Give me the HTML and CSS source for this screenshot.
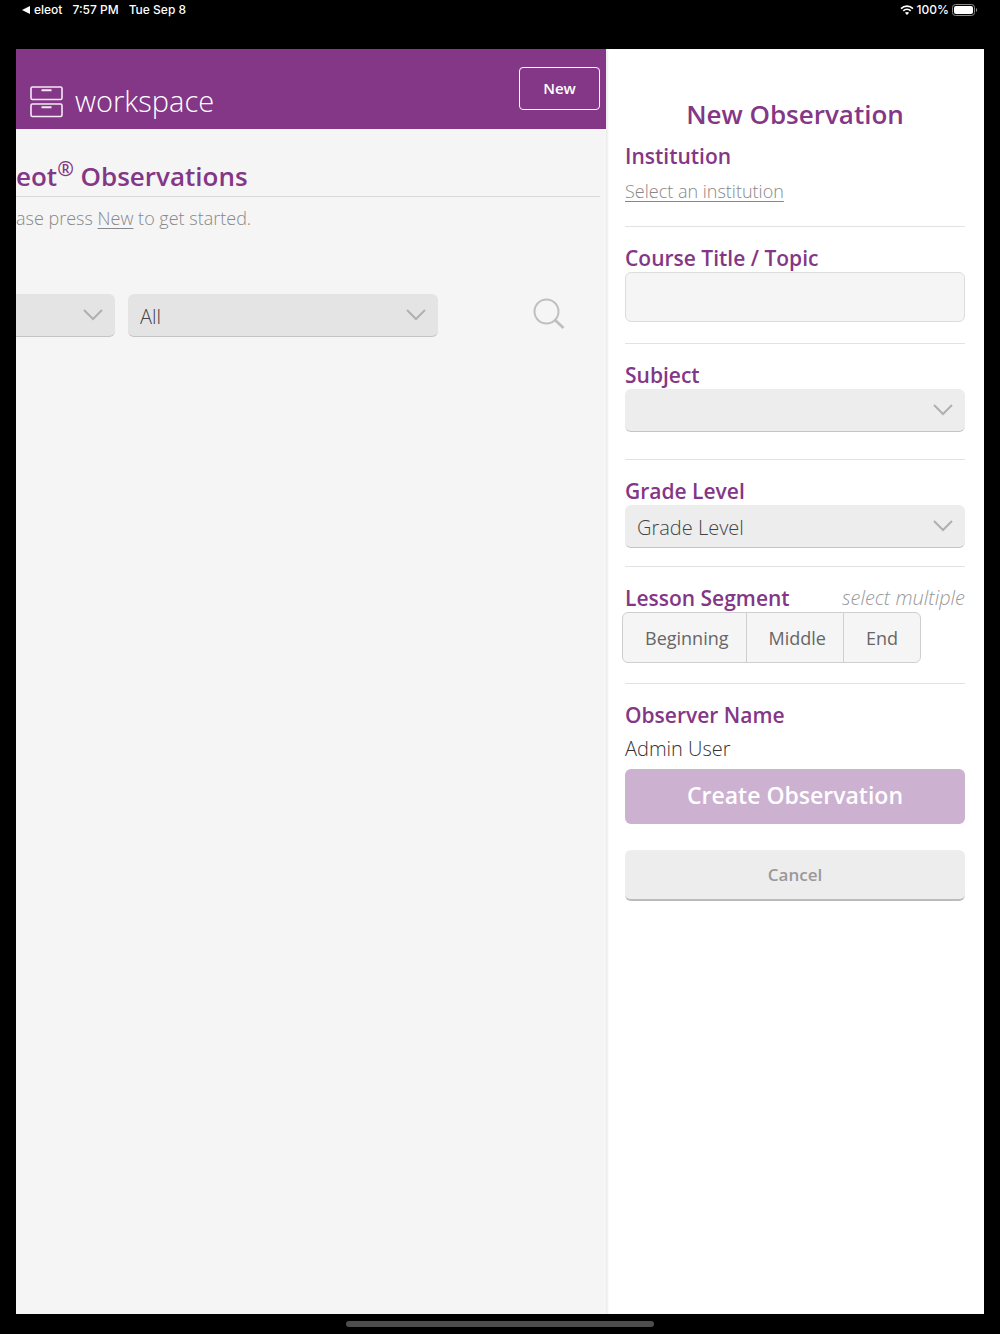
FILE: index.html
```
<!DOCTYPE html>
<html lang="en">
<head>
    <meta charset="UTF-8">
    <meta name="viewport" content="width=device-width, initial-scale=1.0">
    <title>eleot - Workspace</title>
    <link rel="stylesheet" href="styles.css">
</head>
<body>

    <!-- Device status bar -->
    <div class="status-bar">
        <div class="status-left">
            <span class="back"><svg width="8" height="8" viewBox="0 0 8 8"><path d="M0 4L8 0V8Z" fill="#fff"/></svg>eleot</span>
            <span>7:57 PM</span>
            <span>Tue Sep 8</span>
        </div>
        <div class="status-right">
            <svg width="14" height="10" viewBox="0 0 14 10" fill="none" stroke="#fff" stroke-width="1.7">
                <path d="M1 3.6C4.4.2 9.6.2 13 3.6"/>
                <path d="M3.3 5.9C5.4 3.9 8.6 3.9 10.7 5.9"/>
                <path d="M7 10L4.9 7.7C6.1 6.7 7.9 6.7 9.1 7.7Z" fill="#fff" stroke="none"/>
            </svg>
            <span>100%</span>
            <svg width="26" height="12" viewBox="0 0 26 12">
                <rect x=".5" y=".5" width="22" height="11" rx="3" fill="none" stroke="#888"/>
                <rect x="2" y="2" width="19" height="8" rx="2" fill="#fff"/>
                <path d="M24 4C25.6 4.6 25.6 7.4 24 8Z" fill="#888"/>
            </svg>
        </div>
    </div>

    <div class="app">

        <!-- Left side: workspace -->
        <main class="workspace">
            <header class="header">
                <div class="brand">
                    <svg width="33" height="32" viewBox="0 0 33 32" fill="none" stroke="#f5eaf5" stroke-width="1.6">
                        <rect x="1" y="1" width="31" height="12.5" rx="1.5"/>
                        <rect x="1" y="18" width="31" height="12.5" rx="1.5"/>
                        <path d="M11.5 4.3H21.5M11.5 21.3H21.5" stroke-width="2"/>
                    </svg>
                    <span>workspace</span>
                </div>
                <button type="button" class="new-button">New</button>
            </header>

            <div class="content">
                <h1 class="heading">eot<sup>®</sup> Observations</h1>
                <p class="intro">ase press <a href="#new">New</a> to get started.</p>

                <div class="filters">
                    <div class="select-box filter">
                        <select aria-label="Status"><option></option></select>
                        <svg class="chevron" width="20" height="12" viewBox="0 0 20 12"><path d="M1 1L10 10L19 1"/></svg>
                    </div>
                    <div class="select-box filter">
                        <select aria-label="Institution filter"><option>All</option></select>
                        <svg class="chevron" width="20" height="12" viewBox="0 0 20 12"><path d="M1 1L10 10L19 1"/></svg>
                    </div>
                    <button type="button" class="search" aria-label="Search">
                        <svg width="32" height="32" viewBox="0 0 32 32" fill="none" stroke="#bfbfbf">
                            <circle cx="13.5" cy="13.5" r="12" stroke-width="2"/>
                            <path d="M22 22L30.5 30" stroke-width="2.8"/>
                        </svg>
                    </button>
                </div>
            </div>
        </main>

        <!-- Right side: new observation form -->
        <form class="panel" id="new">
            <h2 class="panel-title">New Observation</h2>

            <div class="field institution">
                <h3 class="label">Institution</h3>
                <a class="institution-link" href="#institution">Select an institution</a>
            </div>

            <div class="field course">
                <label class="label" for="course">Course Title / Topic</label>
                <input type="text" id="course">
            </div>

            <div class="field subject">
                <label class="label" for="subject">Subject</label>
                <div class="select-box">
                    <select id="subject"><option></option></select>
                    <svg class="chevron" width="20" height="12" viewBox="0 0 20 12"><path d="M1 1L10 10L19 1"/></svg>
                </div>
            </div>

            <div class="field">
                <label class="label" for="grade">Grade Level</label>
                <div class="select-box">
                    <select id="grade"><option>Grade Level</option></select>
                    <svg class="chevron" width="20" height="12" viewBox="0 0 20 12"><path d="M1 1L10 10L19 1"/></svg>
                </div>
            </div>

            <div class="field lesson">
                <div class="label-row">
                    <h3 class="label" id="segment">Lesson Segment</h3>
                    <em class="hint">select multiple</em>
                </div>
                <div class="segments" role="group" aria-labelledby="segment">
                    <button type="button" aria-pressed="false">Beginning</button>
                    <button type="button" aria-pressed="false">Middle</button>
                    <button type="button" aria-pressed="false">End</button>
                </div>
            </div>

            <div class="field observer">
                <h3 class="label">Observer Name</h3>
                <p class="observer-name">Admin User</p>
                <button type="submit" class="create" disabled>Create Observation</button>
                <button type="button" class="cancel">Cancel</button>
            </div>
        </form>

    </div>

    <div class="home-bar"><span></span></div>

</body>
</html>
```
FILE: styles.css
```
* {
    box-sizing: border-box;
}

body {
    display: flex;
    flex-direction: column;
    min-height: 100vh;
    margin: 0;
    background: #000;
    font-family: "Open Sans", "Noto Sans", sans-serif;
    font-weight: 300;
    color: #333;
}

h1, h2, h3, p {
    margin: 0;
}

button, input, select {
    font-family: inherit;
    margin: 0;
}

svg {
    display: block;
    flex: none;
}

/* Device status bar */
.status-bar {
    display: flex;
    justify-content: space-between;
    height: 49px;
    padding: 0 22px;
    color: #fff;
    font-family: Inter, sans-serif;
    font-size: 12px;
    font-weight: 500;
    line-height: 20px;
}

.status-left, .status-right {
    display: flex;
    height: 20px;
    align-items: center;
}

.status-left {
    gap: 10px;
}

.status-right {
    gap: 3px;
}

.back {
    display: flex;
    align-items: center;
    gap: 4px;
}

/* App window */
.app {
    flex: 1;
    display: flex;
    margin: 0 16px;
    background: #f5f5f5;
}

.workspace {
    flex: 1;
    min-width: 0;
    overflow: hidden;
}

.header {
    display: flex;
    align-items: center;
    justify-content: space-between;
    height: 80px;
    padding: 0 6px 2px 14px;
    background: #833786;
}

.brand {
    display: flex;
    align-items: center;
    gap: 12px;
    padding-top: 28px;
    color: #fff;
    font-size: 29px;
    line-height: 32px;
}

.brand span {
    margin-top: -2px;
}

.new-button {
    width: 81px;
    height: 43px;
    border: 1px solid #fff;
    border-radius: 4px;
    background: none;
    color: #fff;
    font-size: 15px;
    font-weight: 600;
}

.content {
    padding-right: 6px;
}

.heading {
    padding: 30px 0 2px;
    border-bottom: 1px solid #d9d9d9;
    color: #833786;
    font-size: 26px;
    font-weight: 600;
    line-height: 35px;
}

.heading sup {
    font-size: 20px;
    line-height: 0;
}

.intro {
    color: #888;
    font-size: 18px;
    line-height: 42px;
}

a {
    color: #888;
    text-underline-offset: 3px;
}

.filters {
    display: flex;
    align-items: center;
    margin-top: 55px;
}

.filter {
    width: 310px;
    flex: none;
    margin-right: 13px;
}

/* First filter runs under the left edge while the panel is open */
.filter:first-child {
    margin-left: -211px;
}

.search {
    margin: 0 35px 4px auto;
    padding: 0;
    border: 0;
    background: none;
}

/* Drop-downs */
.select-box {
    position: relative;
}

.select-box select {
    display: block;
    width: 100%;
    height: 43px;
    padding: 2px 12px 0;
    border: 0;
    border-bottom: 1px solid #c4c4c4;
    border-radius: 6px;
    background: #ededed;
    color: #444;
    font-size: 20px;
    font-weight: 300;
    appearance: none;
}

.select-box.filter select {
    background: #e4e4e4;
}

.chevron {
    position: absolute;
    top: 15px;
    right: 12px;
    fill: none;
    stroke: #b0b0b0;
    stroke-width: 2;
    pointer-events: none;
}

/* Right side panel */
.panel {
    width: 378px;
    padding: 47px 19px 0;
    background: #fff;
    box-shadow: inset 2px 0 2px #eee;
}

.panel-title {
    color: #833786;
    font-size: 26px;
    font-weight: 600;
    line-height: 36px;
    text-align: center;
}

.field {
    padding: 17px 0 18px;
    border-bottom: 1px solid #e2e2e2;
}

.field.institution {
    padding: 10px 0 14px;
}

.field.course {
    padding-bottom: 21px;
}

.field.subject {
    padding-bottom: 27px;
}

.field.lesson {
    padding-bottom: 20px;
}

.field.observer {
    border: 0;
}

.label {
    display: block;
    color: #833786;
    font-size: 21px;
    font-weight: 600;
    line-height: 28px;
}

.institution-link {
    display: block;
    font-size: 18px;
    line-height: 42px;
}

input {
    display: block;
    width: 100%;
    height: 50px;
    padding: 0 12px;
    border: 1px solid #dcdcdc;
    border-radius: 6px;
    background: #f5f5f5;
    font-size: 20px;
}

.label-row {
    display: flex;
    justify-content: space-between;
}

.hint {
    color: #999;
    font-size: 20px;
    line-height: 28px;
}

/* Lesson segment buttons */
.segments {
    display: inline-flex;
    height: 51px;
    margin-left: -3px;
    border: 1px solid #cfcfcf;
    border-radius: 6px;
    background: #f5f5f5;
    vertical-align: top;
}

.segments button {
    padding: 0 17px 0 22px;
    border: 0;
    background: none;
    color: #666;
    font-size: 18px;
}

.segments button + button {
    border-left: 1px solid #cfcfcf;
}

.segments button:last-child {
    padding-right: 22px;
}

.observer-name {
    font-size: 20px;
    line-height: 40px;
}

.create, .cancel {
    display: block;
    width: 100%;
    border: 0;
    border-radius: 6px;
}

.create {
    height: 55px;
    padding-bottom: 4px;
    background: #cdb1d1;
    color: #fff;
    font-size: 23px;
    font-weight: 600;
}

.cancel {
    height: 51px;
    margin-top: 26px;
    border-bottom: 2px solid #bbb;
    background: #ededed;
    color: #999;
    font-size: 17px;
    font-weight: 600;
}

/* Home indicator */
.home-bar {
    display: flex;
    align-items: center;
    justify-content: center;
    height: 20px;
}

.home-bar span {
    width: 308px;
    height: 6px;
    border-radius: 3px;
    background: #4d4d4d;
}
```
